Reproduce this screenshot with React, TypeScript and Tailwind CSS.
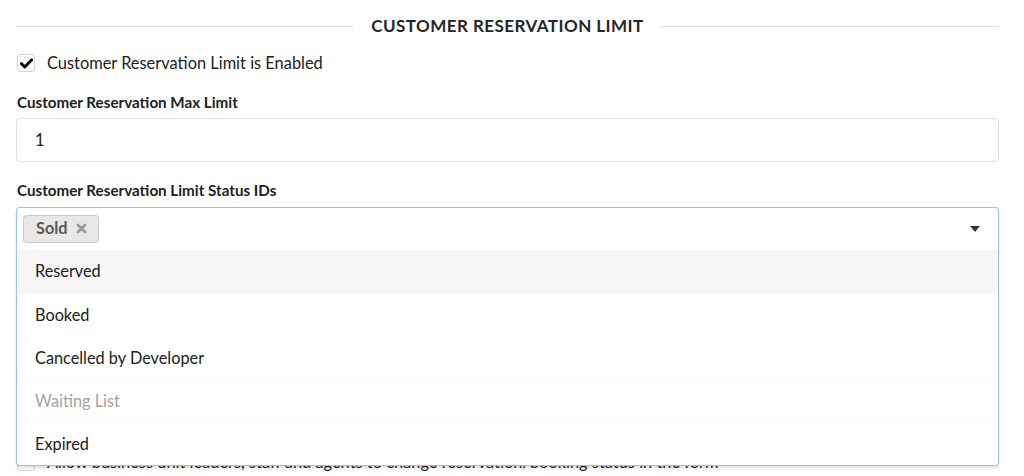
import React from "react";

function CheckIcon() {
  return (
    <svg width="13" height="11" viewBox="0 0 12 10">
      <path d="M1.2 5.2 L4.4 8.2 L10.8 1.6" fill="none" stroke="#111" strokeWidth="2.8" strokeLinecap="round" strokeLinejoin="round" />
    </svg>
  );
}

export default function App() {
  const items = [
    { t: "Reserved", active: true },
    { t: "Booked" },
    { t: "Cancelled by Developer" },
    { t: "Waiting List", disabled: true },
    { t: "Expired" },
  ];
  return (
    <div className="w-[1024px] h-[476px] overflow-hidden bg-white text-[#212121]" style={{ fontFamily: "Lato, 'Noto Sans', sans-serif" }}>
      <div className="pl-[16px] pr-[25px] pt-[16px]">
        {/* Divider header */}
        <div className="flex items-center h-[20px] gap-[17px]">
          <div className="flex-1 h-px bg-[#dedede]" />
          <div className="text-[17px] font-bold uppercase text-[#262626] tracking-[0.45px]">Customer Reservation Limit</div>
          <div className="flex-1 h-px bg-[#dedede]" />
        </div>

        {/* Checkbox */}
        <div className="flex items-center mt-[17px] h-[20px] pl-[1px]">
          <div className="w-[18px] h-[18px] rounded-[3px] border border-[#d4d4d5] flex items-center justify-center">
            <CheckIcon />
          </div>
          <span className="ml-[12px] text-[16.4px] text-[#212121]">Customer Reservation Limit is Enabled</span>
        </div>

        {/* Max limit */}
        <div className="mt-[20px] text-[15.2px] font-bold text-[#212121] leading-[18px] pl-[1px]">Customer Reservation Max Limit</div>
        <div className="mt-[7px] h-[44px] rounded-[4px] border border-[#e0e0e0] flex items-center pl-[18px] text-[16.3px] text-[#212121]">
          1
        </div>

        {/* Status IDs */}
        <div className="mt-[19px] text-[15.2px] font-bold text-[#212121] leading-[18px] pl-[1px]">Customer Reservation Limit Status IDs</div>
        <div className="relative mt-[8px] z-10">
          <div className="h-[43px] border border-b-0 border-[#96c8da] rounded-t-[4px] flex items-center pl-[6px] pr-[18px] shadow-[0_2px_3px_0_rgba(34,36,38,0.15)] bg-white">
            <div className="h-[28px] mt-[-1px] rounded-[4px] bg-[#e8e8e8] shadow-[inset_0_0_0_1px_rgba(34,36,38,0.15)] flex items-center pl-[13px] pr-[12px] text-[16.3px] font-bold text-[#5a5a5a]">
              Sold
              <svg className="ml-[8px]" width="11" height="11" viewBox="0 0 11 11">
                <path d="M2 2 L9 9 M9 2 L2 9" stroke="#9a9a9a" strokeWidth="2.8" strokeLinecap="round" />
              </svg>
            </div>
            <div className="flex-1" />
            <svg width="10" height="6" viewBox="0 0 10 6">
              <path d="M0 0 L10 0 L5 6 Z" fill="#333" />
            </svg>
          </div>
          <div className="absolute top-full left-0 right-0 border border-t-0 border-[#96c8da] rounded-b-[4px] bg-white shadow-[0_2px_3px_0_rgba(34,36,38,0.15)] overflow-hidden">
            {items.map((it, i) => (
              <div
                key={it.t}
                className={
                  "h-[43px] flex items-center pl-[18px] text-[16.3px] " +
                  (i > 0 ? "border-t border-[#fafafa] " : "") +
                  (it.active ? "bg-[#f5f5f5] " : "") +
                  (it.disabled ? "text-[#a3a3a3]" : "text-[#212121]")
                }
              >
                {it.t}
              </div>
            ))}
          </div>
        </div>

        {/* Content partly hidden under the menu */}
        <div className="mt-[202px] flex items-center h-[20px] pl-[1px]">
          <div className="w-[18px] h-[18px] rounded-[3px] border border-[#d4d4d5]" />
          <span className="ml-[12px] text-[16.4px] text-[#212121]">Allow business unit leaders, staff and agents to change reservation/booking status in the form</span>
        </div>
      </div>
    </div>
  );
}
